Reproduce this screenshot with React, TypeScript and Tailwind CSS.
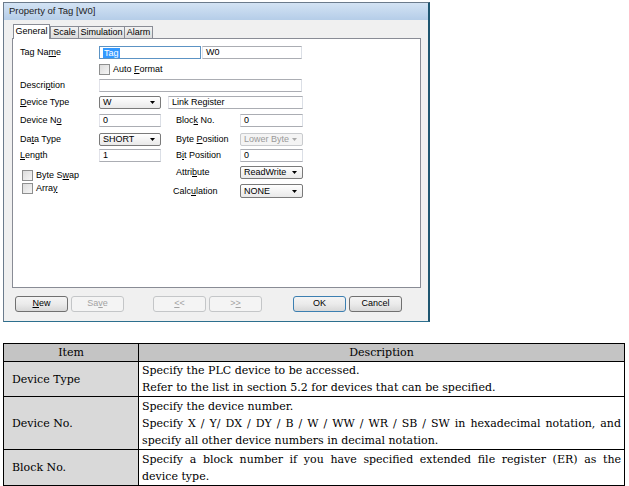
import React from 'react';

type Kids = { children?: React.ReactNode };

function Lbl({ children, className = '' }: Kids & { className?: string }) {
    return <div className={`shrink-0 leading-[13px] ${className}`}>{children}</div>;
}

function U({ children }: Kids) {
    return <span className="underline underline-offset-[1px] decoration-[1px]">{children}</span>;
}

function Box({ children, className = '' }: Kids & { className?: string }) {
    return (
        <div className={`h-[13px] shrink-0 flex items-center border border-[#abadb3] border-l-[#e2e3ea] border-r-[#dbdfe6] bg-white pl-[3px] leading-[11px] ${className}`}>
            {children}
        </div>
    );
}

function Combo({ value, className = '', disabled = false }: { value: string; className?: string; disabled?: boolean }) {
    return (
        <div
            className={`h-[13px] shrink-0 flex items-center rounded-[2px] border pl-[3px] pr-[5px] leading-[11px] ${
                disabled
                    ? 'border-[#c9cbce] bg-[#f4f4f4] text-[#9a9a9a]'
                    : 'border-[#7a7a7a] bg-gradient-to-b from-white to-[#e9e9e9] text-black'
            } ${className}`}
        >
            <span className="flex-1">{value}</span>
            <svg width="5" height="3" viewBox="0 0 5 3">
                <path d="M0 0H5L2.5 3Z" fill={disabled ? '#a9a9a9' : '#000'} />
            </svg>
        </div>
    );
}

function Check({ children, className = '' }: Kids & { className?: string }) {
    return (
        <div className={`flex items-center h-[11px] ${className}`}>
            <div className="w-[11px] h-[11px] border border-[#8e8f8f] bg-gradient-to-br from-[#dcdcdc] to-[#f6f6f6]" />
            <span className="ml-[3px] leading-[11px]">{children}</span>
        </div>
    );
}

function Btn({ children, className = '', disabled = false, def = false }: Kids & { className?: string; disabled?: boolean; def?: boolean }) {
    let look = 'border-[#707070] bg-gradient-to-b from-[#f4f4f4] via-[#ebebeb] to-[#d8d8d8] text-black';
    if (disabled) look = 'border-[#c4c6c8] bg-[#f4f4f4] text-[#a3a3a3]';
    if (def) look = 'border-[#3c7fb1] bg-gradient-to-b from-[#f4f4f4] via-[#ebebeb] to-[#d8d8d8] text-black';
    return (
        <div className={`h-[16px] w-[53px] shrink-0 flex items-center justify-center rounded-[3px] border ${look} ${className}`}>
            {children}
        </div>
    );
}

export default function App() {
    return (
        <div className="w-[629px] h-[486px] bg-white overflow-hidden pt-[2px]">
            {/* dialog */}
            <div className="ml-[3px] w-[427px] h-[320px] flex flex-col border border-[#6b7b8c] border-r-[2px] border-r-[#1f5670] border-b-[#2d6f8e] bg-[#f0f0f0] font-['Liberation_Sans',Arial,sans-serif] text-[9px] text-black">
                <div className="h-[17px] shrink-0 flex items-center pl-[5px] bg-gradient-to-b from-[#d3e3f4] to-[#b5cde8] text-[9.5px] text-[#1e1e1e]">
                    Property of Tag [W0]
                </div>

                {/* tabs */}
                <div className="mt-[4px] ml-[8px] flex items-end h-[14px]">
                    <div className="relative z-10 mb-[-1px] ml-[1px] h-[15px] w-[37px] bg-white border border-[#898c95] border-b-0 flex items-center justify-center">
                        General
                    </div>
                    <div className="h-[12px] w-[29px] border border-[#898c95] border-b-0 bg-gradient-to-b from-[#f3f3f3] to-[#dcdcdc] flex items-center justify-center">
                        Scale
                    </div>
                    <div className="h-[12px] w-[46px] border border-l-0 border-[#898c95] border-b-0 bg-gradient-to-b from-[#f3f3f3] to-[#dcdcdc] flex items-center justify-center">
                        Simulation
                    </div>
                    <div className="h-[12px] w-[28px] border border-l-0 border-[#898c95] border-b-0 bg-gradient-to-b from-[#f3f3f3] to-[#dcdcdc] flex items-center justify-center">
                        Alarm
                    </div>
                </div>

                {/* panel */}
                <div className="ml-[8px] w-[409px] h-[250px] shrink-0 border border-[#898c95] bg-white">
                    <div className="flex items-center mt-[7px] pl-[7px]">
                        <Lbl className="w-[79px]">Tag Na<U>m</U>e</Lbl>
                        <div className="h-[13px] w-[102px] flex items-center border border-[#5c93c4] bg-white pl-[3px]">
                            <span className="bg-[#3399ff] text-white leading-[10px] px-px">Tag</span>
                        </div>
                        <Box className="ml-[1px] w-[100px]">W0</Box>
                    </div>

                    <div className="mt-[5px] pl-[86px]">
                        <Check>Auto <U>F</U>ormat</Check>
                    </div>

                    <div className="flex items-center mt-[4px] pl-[7px]">
                        <Lbl className="w-[79px]">Descri<U>p</U>tion</Lbl>
                        <Box className="w-[203px]" />
                    </div>

                    <div className="flex items-center mt-[4px] pl-[7px]">
                        <Lbl className="w-[79px]"><U>D</U>evice Type</Lbl>
                        <Combo value="W" className="w-[62px]" />
                        <Box className="ml-[7px] w-[135px]">Link Register</Box>
                    </div>

                    <div className="flex items-center mt-[5px] pl-[7px]">
                        <Lbl className="w-[79px]">Device N<U>o</U></Lbl>
                        <Box className="w-[62px]">0</Box>
                        <Lbl className="ml-[15px] w-[64px]">Bloc<U>k</U> No.</Lbl>
                        <Box className="w-[63px]">0</Box>
                    </div>

                    <div className="flex items-center mt-[6px] pl-[7px]">
                        <Lbl className="w-[79px]">Da<U>t</U>a Type</Lbl>
                        <Combo value="SHORT" className="w-[62px]" />
                        <Lbl className="ml-[15px] w-[64px]">Byte <U>P</U>osition</Lbl>
                        <Combo value="Lower Byte" className="w-[63px]" disabled />
                    </div>

                    <div className="flex items-center mt-[3px] pl-[7px]">
                        <Lbl className="w-[79px]"><U>L</U>ength</Lbl>
                        <Box className="w-[62px]">1</Box>
                        <Lbl className="ml-[15px] w-[64px]">B<U>i</U>t Position</Lbl>
                        <Box className="w-[63px]">0</Box>
                    </div>

                    <div className="flex mt-[4px] pl-[9px]">
                        <div className="w-[151px] shrink-0 pt-[4px]">
                            <Check>Byte S<U>w</U>ap</Check>
                            <Check className="mt-[2px]">Arra<U>y</U></Check>
                        </div>
                        <div className="flex flex-col">
                            <div className="flex items-center">
                                <Lbl className="w-[67px] pl-[3px]">Attri<U>b</U>ute</Lbl>
                                <Combo value="ReadWrite" className="w-[63px]" />
                            </div>
                            <div className="flex items-center mt-[5px]">
                                <Lbl className="w-[67px]">Calc<U>u</U>lation</Lbl>
                                <Combo value="NONE" className="w-[63px] h-[14px]" />
                            </div>
                        </div>
                    </div>
                </div>

                {/* buttons */}
                <div className="flex mt-[8px] pl-[11px]">
                    <Btn><U>N</U>ew</Btn>
                    <Btn className="ml-[3px]" disabled>Sa<U>v</U>e</Btn>
                    <Btn className="ml-[29px]" disabled><U>&lt;</U>&lt;</Btn>
                    <Btn className="ml-[3px]" disabled>&gt;<U>&gt;</U></Btn>
                    <Btn className="ml-[31px]" def>OK</Btn>
                    <Btn className="ml-[3px]">Cancel</Btn>
                </div>
            </div>

            {/* description table */}
            <table className="ml-[3px] mt-[21px] w-[622px] border-collapse font-['DejaVu_Serif',serif] text-[11px] leading-[17px] text-black">
                <thead>
                    <tr className="h-[18px] bg-[#c4c4c4]">
                        <th className="w-[135px] border border-black font-normal">Item</th>
                        <th className="border border-black font-normal">Description</th>
                    </tr>
                </thead>
                <tbody>
                    <tr className="h-[35px]">
                        <td className="border border-black bg-[#d9d9d9] pl-[8px]">Device Type</td>
                        <td className="border border-black px-[3px]">
                            <div>Specify the PLC device to be accessed.</div>
                            <div>Refer to the list in section 5.2 for devices that can be specified.</div>
                        </td>
                    </tr>
                    <tr className="h-[53px]">
                        <td className="border border-black bg-[#d9d9d9] pl-[8px]">Device No.</td>
                        <td className="border border-black px-[3px]">
                            <div>Specify the device number.</div>
                            <div className="text-justify">
                                Specify X / Y/ DX / DY / B / W / WW / WR / SB / SW in hexadecimal notation, and specify all other device numbers in decimal notation.
                            </div>
                        </td>
                    </tr>
                    <tr className="h-[36px]">
                        <td className="border border-black bg-[#d9d9d9] pl-[8px]">Block No.</td>
                        <td className="border border-black px-[3px]">
                            <div className="text-justify [text-align-last:justify]">
                                Specify a block number if you have specified extended file register (ER) as the
                            </div>
                            <div>device type.</div>
                        </td>
                    </tr>
                </tbody>
            </table>
        </div>
    );
}
